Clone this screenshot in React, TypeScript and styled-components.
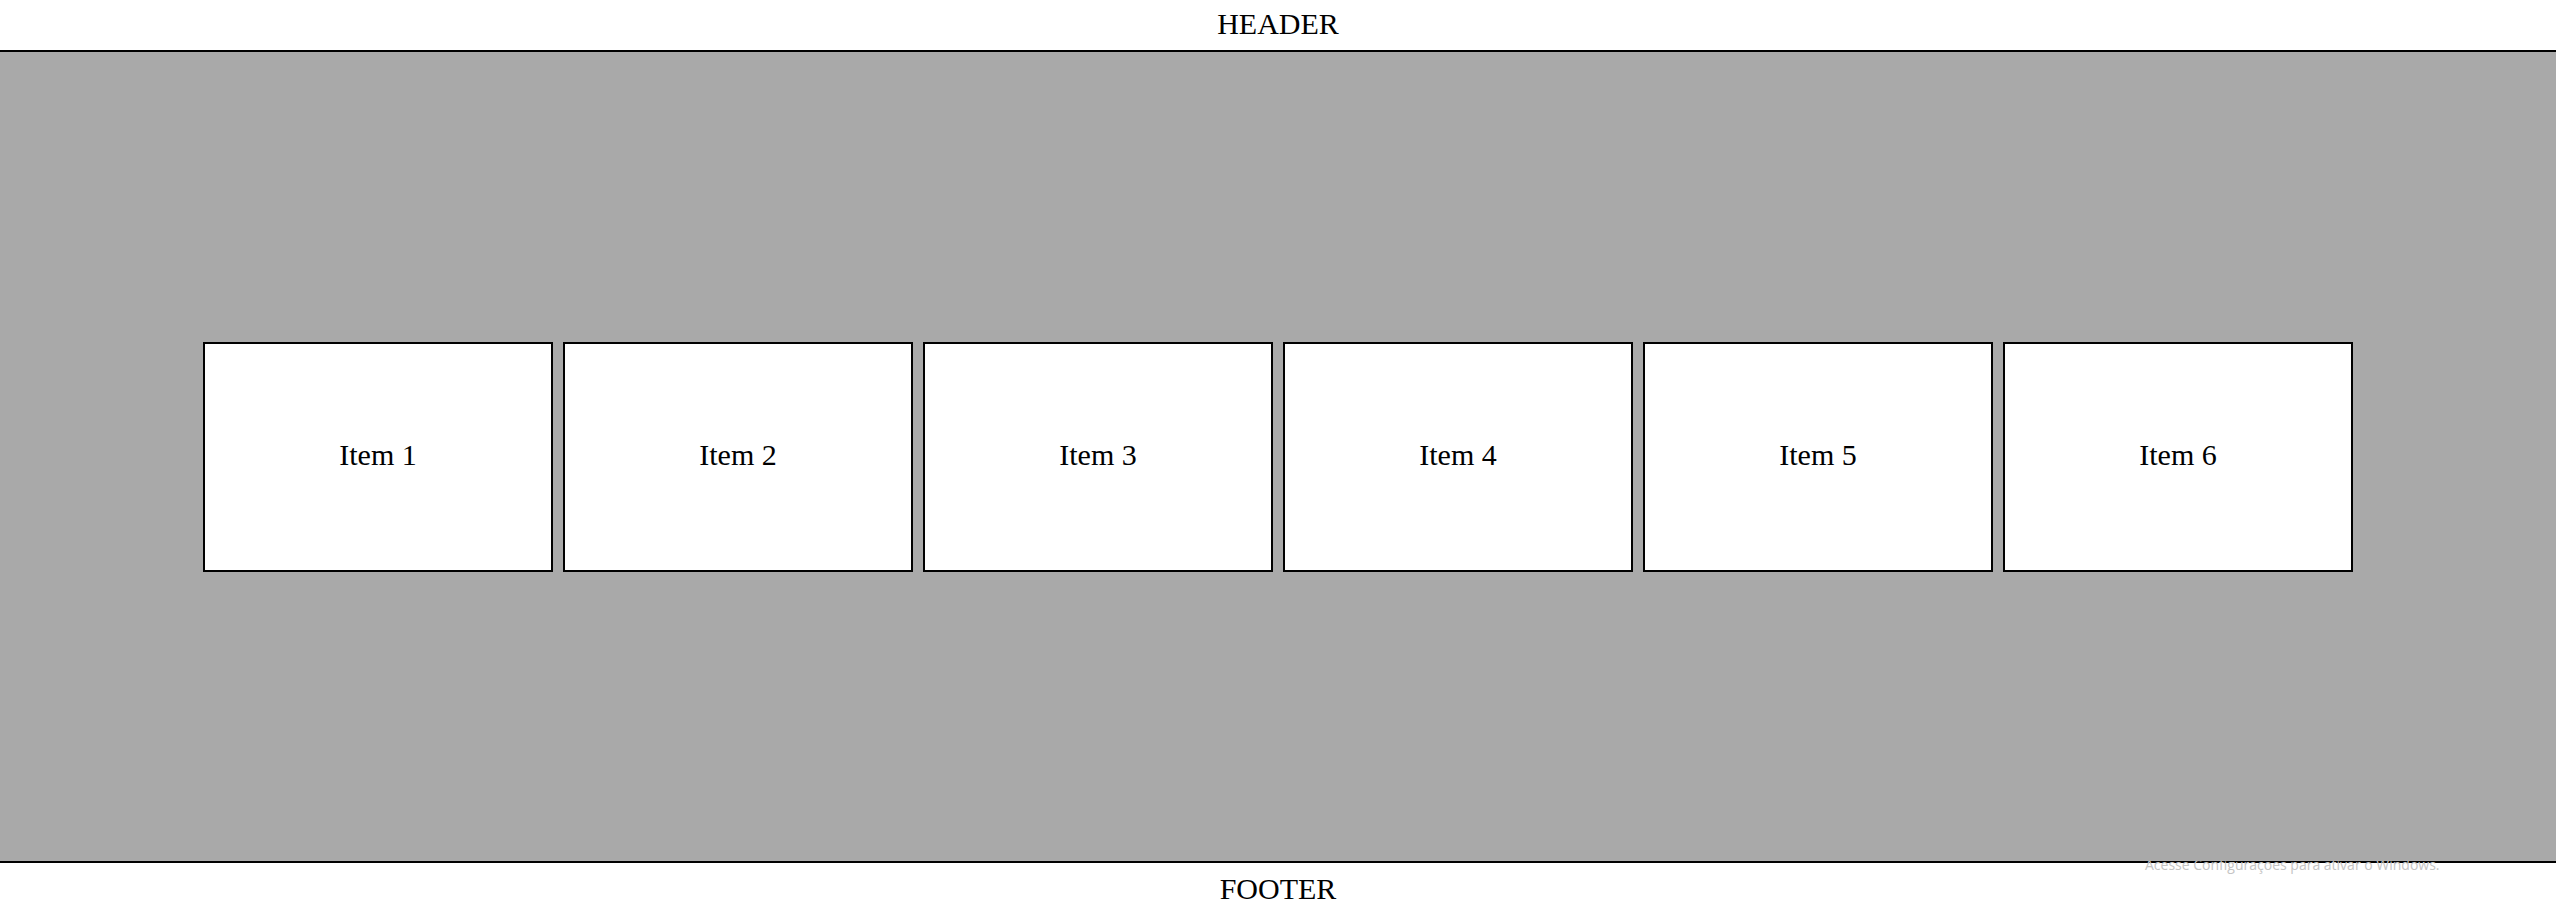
import styled, { createGlobalStyle } from "styled-components";

const items = ["Item 1", "Item 2", "Item 3", "Item 4", "Item 5", "Item 6"];

const GlobalStyle = createGlobalStyle`
  body {
    margin: 0;
    font-family: "Liberation Serif", "Times New Roman", serif;
    color: #000000;
    background: #ffffff;
  }
`;

const App = () => (
  <Page>
    <GlobalStyle />
    <Header>HEADER</Header>
    <Main>
      <ItemRow>
        {items.map((name) => (
          <Item key={name}>{name}</Item>
        ))}
      </ItemRow>
    </Main>
    <Footer>
      FOOTER
      <Watermark>Acesse Configurações para ativar o Windows.</Watermark>
    </Footer>
  </Page>
);

const Page = styled.div`
  display: flex;
  flex-direction: column;
  height: 918px;
  overflow: hidden;
`;

const Header = styled.header`
  box-sizing: border-box;
  height: 52px;
  padding-bottom: 3px;
  display: flex;
  align-items: center;
  justify-content: center;
  font-size: 30px;
  border-bottom: 2px solid #000000;
`;

const Main = styled.main`
  height: 809px;
  background: #a9a9a9;
  display: flex;
  align-items: center;
  justify-content: center;
  position: relative;
  z-index: 1;
`;

const ItemRow = styled.div`
  display: flex;
  gap: 10px;
`;

const Item = styled.div`
  box-sizing: border-box;
  width: 350px;
  height: 230px;
  padding-bottom: 3px;
  background: #ffffff;
  border: 2px solid #000000;
  display: flex;
  align-items: center;
  justify-content: center;
  font-size: 30px;
`;

const Footer = styled.footer`
  flex: 1;
  position: relative;
  padding-bottom: 3px;
  display: flex;
  align-items: center;
  justify-content: center;
  font-size: 30px;
  border-top: 2px solid #000000;
`;

const Watermark = styled.span`
  position: absolute;
  top: -8px;
  left: 2145px;
  font-family: "Open Sans", "DejaVu Sans", sans-serif;
  font-size: 14px;
  color: #c4c4c4;
  white-space: nowrap;
`;

export default App;
